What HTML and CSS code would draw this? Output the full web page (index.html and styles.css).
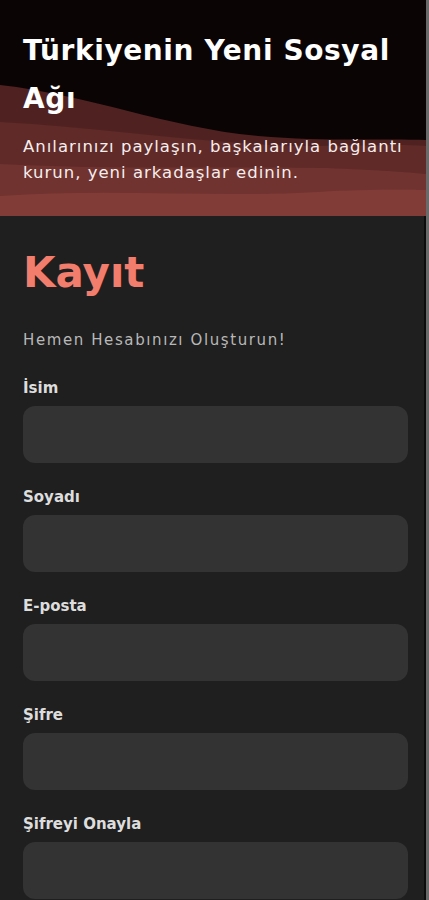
FILE: index.html
```html
<!DOCTYPE html>
<html lang="tr">
<head>
<meta charset="utf-8">
<meta name="viewport" content="width=device-width, initial-scale=1">
<title>Kayıt</title>
<link rel="stylesheet" href="styles.css">
</head>
<body>
<div class="page">
  <header class="hero">
    <svg class="hero-waves" viewBox="0 0 429 216" preserveAspectRatio="none" aria-hidden="true">
      <rect x="0" y="0" width="429" height="216" fill="#0b0405"/>
      <path d="M0,85 C90,95 170,128 260,136 C330,142 390,138 429,140 L429,216 L0,216 Z" fill="#4f2221"/>
      <path d="M0,122 C110,128 220,146 320,146 C370,146 400,144 429,146 L429,216 L0,216 Z" fill="#5f2a27"/>
      <path d="M0,164 C120,170 250,166 330,168 C380,170 410,172 429,174 L429,216 L0,216 Z" fill="#70332f"/>
      <path d="M0,196 C110,188 220,198 320,192 C370,189 410,190 429,190 L429,216 L0,216 Z" fill="#823c37"/>
    </svg>
    <h1 class="hero-title">Türkiyenin Yeni Sosyal Ağı</h1>
    <p class="hero-text">Anılarınızı paylaşın, başkalarıyla bağlantı kurun, yeni arkadaşlar edinin.</p>
  </header>
  <main class="form-area">
    <h2 class="form-title">Kayıt</h2>
    <p class="form-sub">Hemen Hesabınızı Oluşturun!</p>
    <form class="form">
      <label class="field"><span class="field-label">İsim</span><input class="field-input" type="text"></label>
      <label class="field"><span class="field-label">Soyadı</span><input class="field-input" type="text"></label>
      <label class="field"><span class="field-label">E-posta</span><input class="field-input" type="email"></label>
      <label class="field"><span class="field-label">Şifre</span><input class="field-input" type="password"></label>
      <label class="field"><span class="field-label">Şifreyi Onayla</span><input class="field-input" type="password"></label>
    </form>
  </main>
</div>
</body>
</html>
```
FILE: styles.css
```css
* { box-sizing: border-box; }
html, body { margin: 0; padding: 0; }
body {
  background: #1f1f1f;
  font-family: "DejaVu Sans", "Open Sans", sans-serif;
  color: #e6e6e6;
  overflow: hidden;
}
.page {
  width: 429px;
  min-height: 900px;
  border-right: 3px solid #6a6a6a;
  box-shadow: inset -2px 0 0 #0c0c0c;
}
.hero {
  position: relative;
  padding: 27px 6px 30px 23px;
  overflow: hidden;
}
.hero-waves {
  position: absolute;
  inset: 0;
  width: 100%;
  height: 100%;
  z-index: 0;
}
.hero-title {
  position: relative;
  z-index: 1;
  margin: 0;
  font-size: 28px;
  font-weight: 700;
  line-height: 48px;
  letter-spacing: 0.6px;
  color: #ffffff;
}
.hero-text {
  position: relative;
  z-index: 1;
  margin: 11px 0 0;
  font-size: 16.5px;
  font-weight: 400;
  line-height: 26px;
  letter-spacing: 1px;
  color: #f6eeee;
}
.form-area {
  padding: 25px 18px 0 23px;
}
.form-title {
  margin: 0;
  font-size: 42px;
  font-weight: 700;
  line-height: 64px;
  color: #f27d6c;
}
.form-sub {
  margin: 23px 0 0;
  font-size: 15px;
  line-height: 24px;
  color: #b8b8b8;
  letter-spacing: 1.6px;
}
.form {
  display: flex;
  flex-direction: column;
  gap: 22px;
  margin-top: 24px;
}
.field {
  display: flex;
  flex-direction: column;
  gap: 6px;
}
.field-label {
  font-size: 15px;
  font-weight: 700;
  line-height: 24px;
  color: #dddddd;
}
.field-input {
  display: block;
  width: 100%;
  height: 57px;
  border: none;
  outline: none;
  border-radius: 12px;
  background: #333333;
  color: #eeeeee;
  font: inherit;
  padding: 0 16px;
}
```
